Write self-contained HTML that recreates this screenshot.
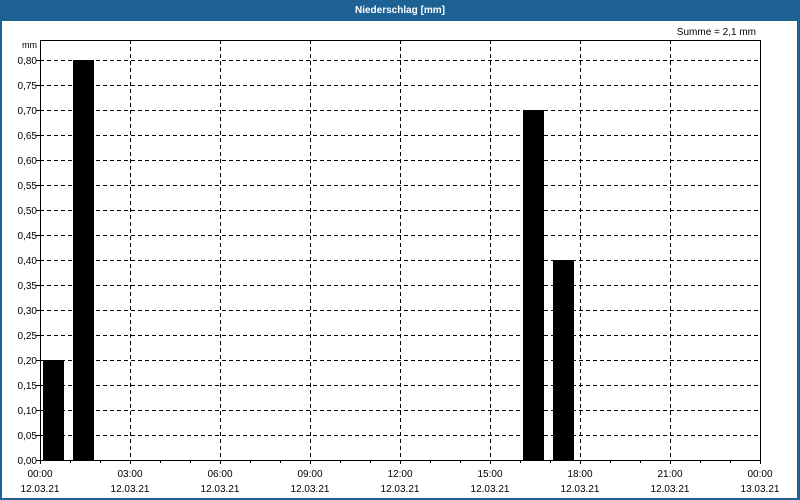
<!DOCTYPE html>
<html><head><meta charset="utf-8"><style>
html,body{margin:0;padding:0;background:#fff;}
svg{display:block;}
text{font-family:"Liberation Sans","DejaVu Sans",sans-serif;font-size:10px;fill:#000;}
</style></head><body>
<svg width="800" height="500" viewBox="0 0 800 500" xmlns="http://www.w3.org/2000/svg">
<rect x="0" y="0" width="800" height="500" fill="#1e6195"/>
<rect x="2" y="21" width="795" height="477" fill="#fff"/>
<text x="400" y="13" text-anchor="middle" fill="#fff" style="fill:#fff;font-weight:bold;font-size:10px">Niederschlag [mm]</text>
<text x="756" y="35" text-anchor="end">Summe = 2,1 mm</text>
<text x="37" y="48" text-anchor="end" style="font-size:9px">mm</text>
<g stroke="#000" stroke-width="1" stroke-dasharray="4,3" shape-rendering="crispEdges">
<path d="M40 60.5H760M40 85.5H760M40 110.5H760M40 135.5H760M40 160.5H760M40 185.5H760M40 210.5H760M40 235.5H760M40 260.5H760M40 285.5H760M40 310.5H760M40 335.5H760M40 360.5H760M40 385.5H760M40 410.5H760M40 435.5H760"/>
<path d="M130.5 40V460M220.5 40V460M310.5 40V460M400.5 40V460M490.5 40V460M580.5 40V460M670.5 40V460"/>
</g>
<g fill="#000" shape-rendering="crispEdges">
<rect x="43" y="360" width="21" height="100"/>
<rect x="73" y="60" width="21" height="400"/>
<rect x="523" y="110" width="21" height="350"/>
<rect x="553" y="260" width="21" height="200"/>
</g>
<g stroke="#000" fill="none" shape-rendering="crispEdges">
<path d="M40.5 40.5H760.5V460.5H40.5Z"/>
<path d="M36 60.5H40M36 85.5H40M36 110.5H40M36 135.5H40M36 160.5H40M36 185.5H40M36 210.5H40M36 235.5H40M36 260.5H40M36 285.5H40M36 310.5H40M36 335.5H40M36 360.5H40M36 385.5H40M36 410.5H40M36 435.5H40M36 460.5H40"/>
<path d="M40.5 460V464M70.5 460V463M100.5 460V463M130.5 460V464M160.5 460V463M190.5 460V463M220.5 460V464M250.5 460V463M280.5 460V463M310.5 460V464M340.5 460V463M370.5 460V463M400.5 460V464M430.5 460V463M460.5 460V463M490.5 460V464M520.5 460V463M550.5 460V463M580.5 460V464M610.5 460V463M640.5 460V463M670.5 460V464M700.5 460V463M730.5 460V463M760.5 460V464"/>
</g>
<g text-anchor="end">
<text x="37" y="64">0,80</text><text x="37" y="89">0,75</text><text x="37" y="114">0,70</text><text x="37" y="139">0,65</text>
<text x="37" y="164">0,60</text><text x="37" y="189">0,55</text><text x="37" y="214">0,50</text><text x="37" y="239">0,45</text>
<text x="37" y="264">0,40</text><text x="37" y="289">0,35</text><text x="37" y="314">0,30</text><text x="37" y="339">0,25</text>
<text x="37" y="364">0,20</text><text x="37" y="389">0,15</text><text x="37" y="414">0,10</text><text x="37" y="439">0,05</text>
<text x="37" y="464">0,00</text>
</g>
<g text-anchor="middle">
<text x="40" y="477">00:00</text><text x="130" y="477">03:00</text><text x="220" y="477">06:00</text><text x="310" y="477">09:00</text>
<text x="400" y="477">12:00</text><text x="490" y="477">15:00</text><text x="580" y="477">18:00</text><text x="670" y="477">21:00</text><text x="760" y="477">00:00</text>
<text x="40" y="492">12.03.21</text><text x="130" y="492">12.03.21</text><text x="220" y="492">12.03.21</text><text x="310" y="492">12.03.21</text>
<text x="400" y="492">12.03.21</text><text x="490" y="492">12.03.21</text><text x="580" y="492">12.03.21</text><text x="670" y="492">12.03.21</text><text x="760" y="492">13.03.21</text>
</g>
</svg>
</body></html>
